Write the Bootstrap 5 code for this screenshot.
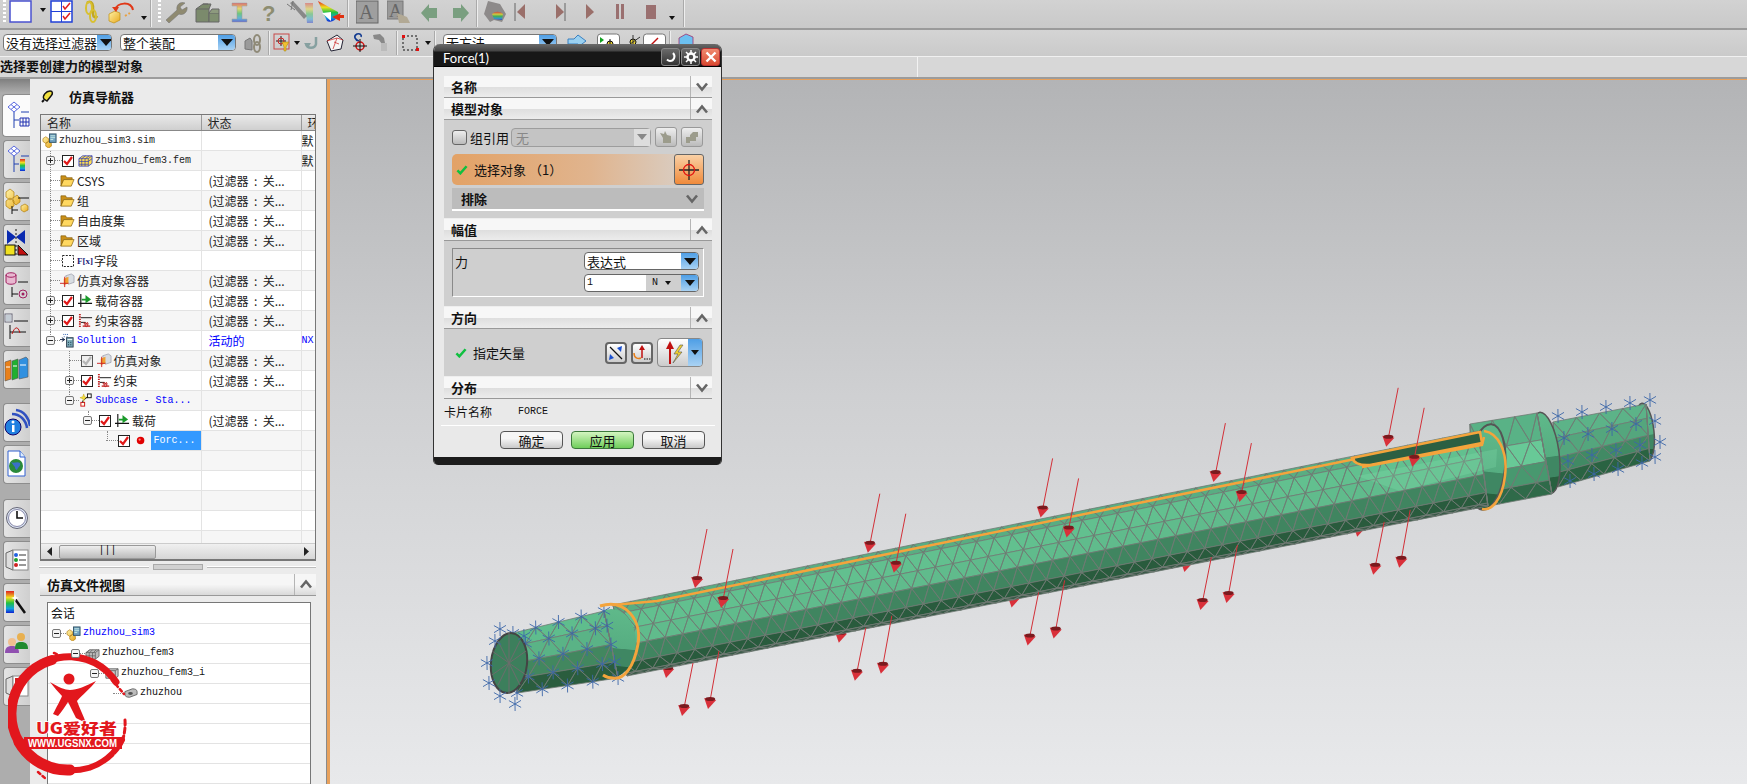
<!DOCTYPE html>
<html lang="zh">
<head>
<meta charset="UTF-8">
<title>Force(1)</title>
<link href="https://cdn.jsdelivr.net/npm/bootstrap@5.3.0/dist/css/bootstrap.min.css" rel="stylesheet">
<style>
    html, body { height: 100%; }
    body { background: #ccc; color: #111; font: 12px/1 "Noto Sans CJK SC", sans-serif; overflow: hidden; }
    .mono { font-family: "Liberation Mono", "Noto Sans CJK SC", monospace; font-size: 10px; }
    .no-shrink { flex: none; }
    svg { display: block; flex: none; }

    /* toolbars */
    .tb-one { height: 30px; background: linear-gradient(#d2d2d2, #c9c9c9); border-bottom: 2px solid #9a9a9a; }
    .tb-two { height: 27px; background: linear-gradient(#d4d4d4, #cacaca); border-bottom: 1px solid #f0f0f0; }
    .tb-sep { width: 1px; height: 24px; background: #eee; border-left: 1px solid #aaa; box-sizing: content-box; margin: 0 3px; }
    .tb-one .tb-sep { height: 27px; }
    .tb-grip { width: 3px; height: 24px; margin: 0 3px; background: repeating-linear-gradient(#fff 0 2px, transparent 2px 4px); }
    .tb-caret { width: 0; height: 0; border: 3.5px solid transparent; border-top: 4px solid #111; border-bottom: 0; }
    .combo { height: 17px; background: #fff; border: 1px solid #777; border-radius: 4px; display: flex; align-items: center; padding-left: 2px; font-size: 13px; overflow: hidden; }
    .combo-text { flex-grow: 1; white-space: nowrap; }
    .combo-btn { width: 17px; align-self: stretch; flex: none; background: linear-gradient(#4f9fe6, #a9d2f3); display: flex; align-items: center; justify-content: center; }
    .combo-btn::after { content: ""; border: 6px solid transparent; border-top: 7px solid #111; border-bottom: 0; }
    .c-a { width: 109px; margin-left: 3px; }
    .c-b { width: 116px; margin-left: 8px; }
    .c-c { width: 114px; margin-left: 4px; }
    .prompt { height: 22px; background: #d7d7d7; border-bottom: 2px solid #9c9c9c; font-weight: 700; font-size: 13px; padding-top: 2px; }
    .prompt-tick { position: absolute; left: 917px; top: 0; bottom: 0; border-left: 1px solid #f2f2f2; }

    /* left side */
    .tab-strip { width: 30px; background: linear-gradient(#7f7f7f 0, #adadad 14px); padding: 15px 0 0 3px; gap: 3px; }
    .side-tab { height: 39px; background: linear-gradient(90deg, #e4e4e4, #cfcfcf); border: 1px solid #8d8d8d; border-right: 0; border-radius: 4px 0 0 4px; display: flex; align-items: center; justify-content: center; }
    .side-tab.on { height: 43px; margin-left: -1px; background: #fbfbfb; }
    .gap-a { margin-top: 11px; }
    .gap-b { margin-top: 12px; }
    .side-panel { width: 296px; background: #ebebeb; }
    .edge-grey { width: 1px; background: #8a8a8a; }
    .edge-orange { width: 3px; background: #e8a15c; }
    .panel-title { height: 35px; padding-left: 11px; font-weight: 700; font-size: 13px; gap: 13px; }
    .nav-box { width: 276px; height: 447px; margin-left: 10px; border: 1px solid #777; background: #fff; border-bottom-width: 2px; }
    .nav-grid { table-layout: fixed; width: 274px; margin: 0; font-size: 12px; }
    .nav-grid > :not(caption) > * > * { padding: 0; height: 20px; border: 0; border-right: 1px solid #e3e3e3; border-bottom: 1px solid #e3e3e3; box-shadow: none; background: transparent; color: #222; white-space: nowrap; overflow: hidden; vertical-align: middle; }
    .nav-grid thead th { height: 16px; background: linear-gradient(#e9e9e9, #cfcfcf); font-weight: 400; padding-left: 6px; border-right: 1px solid #999; border-bottom: 1px solid #888; }
    .nav-grid tr.alt > td { background: #f6f6f6; }
    .nav-grid td.col-state { padding-left: 7px; }
    .nav-grid td.blue { color: #0000ff; }
    .tree-row { height: 19px; display: flex; align-items: center; position: relative; }
    .tree-v { position: absolute; top: 0; bottom: 0; border-left: 1px dotted #888; }
    .tree-v.half { bottom: 50%; }
    .tree-slot { flex: none; height: 19px; display: flex; align-items: center; position: relative; }
    .tree-slot::after { content: ""; flex-grow: 1; border-top: 1px dotted #888; }
    .tree-slot.bare::after { margin-left: 4px; }
    .tree-exp { width: 9px; height: 9px; border: 1px solid #777; border-radius: 2px; background: #f4f4f4; position: relative; flex: none; z-index: 1; }
    .tree-exp::before { content: ""; position: absolute; left: 1px; right: 1px; top: 3px; border-top: 1px solid #222; }
    .tree-exp.plus::after { content: ""; position: absolute; top: 1px; bottom: 1px; left: 3px; border-left: 1px solid #222; }
    .tree-label { margin-left: 2px; white-space: nowrap; }
    .tree-label.sel { background: #3399ff; color: #fff; align-self: stretch; display: flex; align-items: center; padding-left: 3px; flex-grow: 1; margin-right: -1px; }
    .tree-fx { font: 700 9px "Liberation Serif", serif; color: #1c1c78; width: 15px; margin-left: 3px; }
    .h-bar { height: 16px; background: linear-gradient(#f0f0f0, #d6d6d6); border-top: 1px solid #ccc; padding: 0 5px; }
    .h-thumb { width: 97px; height: 14px; margin-left: 5px; background: linear-gradient(#eee, #bbb); border: 1px solid #999; border-radius: 2px; text-align: center; }
    .sash { height: 13px; margin-left: 9px; width: 277px; gap: 4px; }
    .sash i { flex-grow: 1; border-top: 1px solid #fff; border-bottom: 1px solid #bbb; }
    .sash b { width: 50px; height: 6px; background: #d0d0d0; border: 1px solid #aaa; }
    .file-head { width: 276px; height: 22px; margin-left: 10px; background: linear-gradient(#f6f6f6 50%, #d9d9d9); border-bottom: 1px solid #999; font-weight: 700; font-size: 13px; padding-left: 7px; }
    .file-head > span { flex-grow: 1; }
    .chev-cell { width: 22px; align-self: stretch; border-left: 1px solid #b5b5b5; display: flex; align-items: center; justify-content: center; }
    .file-box { width: 264px; margin: 6px 0 0 17px; padding-top: 1px; flex-grow: 1; border: 1px solid #777; border-bottom: 0; background: #fff; }
    .file-line { height: 20px; border-bottom: 1px solid #e3e3e3; padding-left: 3px; }

    /* graphics window */
    .view-3d { background: linear-gradient(#b3b4b6 0, #cfd0d2 45%, #e8e9eb 100%); border-top: 1px solid #e8a15c; min-width: 0; }
    .view-3d svg { width: 100%; height: 100%; }

    /* Force dialog */
    .force-dlg { position: absolute; left: 433px; top: 44px; width: 289px; height: 421px; background: #e9e9e9; border-radius: 7px 7px 5px 5px; overflow: hidden; border-left: 1px solid #333; border-right: 1px solid #333; }
    .dlg-bar { height: 23px; background: linear-gradient(#6a6a6a 0, #444 7px, #171717 8px); border-bottom: 1px solid #000; color: #fff; font: 13px "Lato", "Liberation Sans", sans-serif; padding: 0 1px 0 9px; gap: 1px; }
    .dlg-bar > span { flex-grow: 1; padding-top: 6px; }
    .dlg-btn { width: 19px; height: 18px; border-radius: 3px; background: linear-gradient(#6a6a6a, #333); border: 1px solid #888; display: flex; align-items: center; justify-content: center; }
    .dlg-btn.red { background: linear-gradient(#f08a70, #d94a30); border-color: #b33; }
    .dlg-foot { position: absolute; left: 0; right: 0; bottom: 0; height: 8px; background: #1c1c1c; }
    .dlg-body { padding: 9px 9px 0 10px; }
    .sec-head { height: 22px; background: linear-gradient(#f7f7f7 50%, #dedede 52%, #ececec); border-bottom: 1px solid #999; font-weight: 700; font-size: 13px; padding-left: 7px; }
    .sec-head > span { flex-grow: 1; }
    .sec-body { background: #cfcfcf; border-bottom: 1px solid #eee; }
    .sec-model { height: 99px; padding: 7px 8px 0; }
    .sec-mag { height: 66px; padding: 7px 8px 0; }
    .sec-dir { height: 48px; padding: 0 9px 0 11px; }
    .chk-box { width: 15px; height: 15px; border: 1px solid #666; border-radius: 3px; background: linear-gradient(#eee, #bbb); }
    .ref-label { margin-left: 3px; font-size: 13px; white-space: nowrap; }
    .sel-off { width: 140px; height: 19px; margin-left: 2px; background: #c4c4c4; border: 1px solid #9d9d9d; border-radius: 4px; color: #888; font-size: 13px; padding-left: 4px; }
    .sel-off > span { flex-grow: 1; }
    .sel-off > i { width: 16px; align-self: stretch; background: #ddd; display: flex; align-items: center; justify-content: center; }
    .sel-off > i::after { content: ""; border: 5px solid transparent; border-top: 6px solid #888; border-bottom: 0; }
    .ico-btn { width: 22px; height: 20px; padding: 0; background: linear-gradient(#eee, #bbb); border: 1px solid #999; border-radius: 3px; display: flex; align-items: center; justify-content: center; }
    .ico-btn.dark { border: 2px solid #666; height: 22px; background: linear-gradient(#fff, #ccc); border-radius: 4px; }
    .row-select { height: 31px; margin-top: 7px; padding-left: 4px; border-radius: 5px; background: linear-gradient(90deg, #e3a266, #e0b48e 55%, #d8d3ce); gap: 6px; font-size: 13px; }
    .row-select > span { flex-grow: 1; }
    .aim-btn { width: 30px; height: 31px; border: 1px solid #666; border-radius: 3px; background: linear-gradient(#f9d0a5, #f08a3a); display: flex; align-items: center; justify-content: center; }
    .row-exclude { height: 23px; margin-top: 3px; background: #bcbcbc; border-bottom: 2px solid #fff; font-weight: 700; font-size: 13px; padding: 0 5px 0 9px; }
    .row-exclude > span { flex-grow: 1; }
    .mag-box { height: 49px; border: 1px solid #fff; border-top-color: #8a8a8a; border-left-color: #8a8a8a; padding: 3px 4px 0 2px; font-size: 13px; }
    .mag-label { flex-grow: 1; padding-top: 3px; }
    .mag-inputs { width: 115px; gap: 4px; }
    .input-wrap { height: 18px; font-size: 13px; border-color: #666; }
    .unit-box { width: 35px; align-self: stretch; background: #cfcfcf; display: flex; align-items: center; padding-left: 6px; gap: 7px; }
    .arrow-btn::after { border-width: 5px; border-top-width: 6px; }
    .dir-text { flex-grow: 1; margin-left: 6px; font-size: 13px; }
    .big-split { width: 46px; height: 29px; margin-left: 4px; border: 1px solid #888; border-radius: 4px; background: linear-gradient(#fff, #ccc); overflow: hidden; }
    .split-part { width: 15px; align-self: stretch; margin-left: auto; background: linear-gradient(#4f9fe6, #a9d2f3); display: flex; align-items: center; justify-content: center; }
    .split-part::after { content: ""; border: 4px solid transparent; border-top: 5px solid #111; border-bottom: 0; }
    .card-line { height: 27px; gap: 26px; font-size: 12px; border-bottom: 1px solid #fff; margin: 0 -3px; padding-left: 3px; }
    .dlg-actions { padding: 5px 7px 0 0; gap: 8px; justify-content: flex-end; }
    .dlg-actions .btn { width: 63px; height: 18px; padding: 0; font-size: 13px; line-height: 15px; border: 1px solid #555; border-radius: 4px; color: #111; background: linear-gradient(#f6f6f6 40%, #c9c9c9); }
    .dlg-actions .btn.go { background: linear-gradient(#d3f5c0, #6fce5b); border-color: #3c7a3c; }

    .stamp { position: absolute; left: 8px; top: 650px; }
</style>
</head>
<body class="d-flex flex-column">

<svg width="0" height="0" class="position-absolute">
    <defs>
        <linearGradient id="g-cube" x1="0" y1="0" x2="1" y2="1"><stop offset="0" stop-color="#fff3a8"/><stop offset="1" stop-color="#e8a81e"/></linearGradient>
        <linearGradient id="g-rain" x1="0" y1="0" x2="0" y2="1"><stop offset="0" stop-color="#e02020"/><stop offset=".3" stop-color="#f0e020"/><stop offset=".55" stop-color="#20c040"/><stop offset=".8" stop-color="#10a0e0"/><stop offset="1" stop-color="#1020d0"/></linearGradient>
        <linearGradient id="g-end" x1="0" y1="0" x2="0" y2="1"><stop offset="0" stop-color="#5fb98a"/><stop offset=".55" stop-color="#56ad81"/><stop offset=".56" stop-color="#3f8763"/><stop offset=".8" stop-color="#3f8763"/><stop offset=".81" stop-color="#28603f"/><stop offset="1" stop-color="#28603f"/></linearGradient>
    </defs>
    <symbol id="i-sim" viewBox="0 0 16 16"><path d="M1 6l3-2 3 2v3l-3 2-3-2zM4 11l3-2 3 2v3l-3 2-3-2z" fill="url(#g-cube)" stroke="#b07a10" stroke-width=".7"/><rect x="8" y="1" width="7" height="9" fill="#6fa0c0" stroke="#356"/><path d="M9 3h5M9 5h5M9 7h3" stroke="#dfe" stroke-width=".8"/></symbol>
    <symbol id="i-fem" viewBox="0 0 16 16"><path d="M1 6l4-3h10v8l-4 3H1z" fill="#ffe050" stroke="#2230c0" stroke-width=".8"/><path d="M1 6h10v8M11 6l4-3M4 6v8M7.500 6v8M1 9h10M1 12h10M8 3l-4 3M12 3L8 6M11 9l4-3" stroke="#2230c0" stroke-width=".7" fill="none"/></symbol>
    <symbol id="i-folder" viewBox="0 0 16 16"><path d="M1 3h5l1 2h6v2H4L1 14z" fill="#c98f18" stroke="#805a08" stroke-width=".7"/><path d="M1 14l3-7h11l-3 7z" fill="#ffd860" stroke="#805a08" stroke-width=".7"/></symbol>
    <symbol id="i-simobj" viewBox="0 0 16 16"><path d="M6 3l6-2 3 2v7l-6 2z" fill="#d8dde2" stroke="#889" stroke-width=".6"/><path d="M4 6l5-2v7l-5 2z" fill="#f0a030"/><path d="M5 4v11M0 11h9" stroke="#c22" stroke-width="1"/></symbol>
    <symbol id="i-load" viewBox="0 0 16 16"><path d="M3 1v14M0 11h15" stroke="#111" stroke-width="1.200"/><path d="M4 6h4V2l6 5-6 4V8H4z" fill="#1a9a2a"/></symbol>
    <symbol id="i-cons" viewBox="0 0 16 16"><path d="M2 1v14" stroke="#c02020" stroke-width="2" stroke-dasharray="1.500 1"/><path d="M3 5h12M3 10h5" stroke="#111"/><path d="M6 10l1 2 1-2 1 2 1-2 1 2" fill="none" stroke="#c02020"/><path d="M5 14h8" stroke="#c02020" stroke-width="1.400"/><circle cx="9" cy="13" r="1.500" fill="none" stroke="#c02020"/></symbol>
    <symbol id="i-sol" viewBox="0 0 16 16"><path d="M4 1v1M6 1v1M8 1v1M4 4h1M7 4h1" stroke="#25a" stroke-width="1"/><path d="M0 7h5M2 5l3 2-3 2" stroke="#124" fill="none"/><rect x="7" y="5" width="7" height="10" fill="#79a7b5" stroke="#345"/><path d="M8 7h5" stroke="#fff"/><path d="M8.500 10h1M11 10h1M8.500 12.500h1M11 12.500h1" stroke="#134"/></symbol>
    <symbol id="i-sub" viewBox="0 0 16 16"><path d="M5 1l1 3 3 1-3 1-1 3-1-3-3-1 3-1z" fill="#f4e040" stroke="#c0a010" stroke-width=".5"/><rect x="9" y="1" width="4" height="4" fill="#fff" stroke="#111"/><rect x="2" y="10" width="4" height="4" fill="#ffe" stroke="#d01010"/><path d="M4 8v2M6 7l3-3" stroke="#111"/></symbol>
    <symbol id="i-gmesh" viewBox="0 0 16 16"><path d="M1 7l4-3h10v7l-4 3H1z" fill="#bbb" stroke="#555" stroke-width=".8"/><path d="M1 7h10v7M11 7l4-3M4.500 7v7M8 7v7M1 10.500h10M5 4L2 7M8 4L5 7M12 4L9 7" stroke="#555" stroke-width=".7" fill="none"/></symbol>
    <symbol id="i-gbox" viewBox="0 0 16 16"><path d="M2 5l3-2h10v8l-3 2H2z" fill="#ccc" stroke="#666"/><path d="M2 5h10v8M12 5l3-2" stroke="#666" fill="none"/></symbol>
    <symbol id="i-gdisc" viewBox="0 0 16 16"><path d="M2 6l8-3c3 0 5 1 5 3v3l-8 3c-3 0-5-1-5-3z" fill="#bbb" stroke="#666"/><ellipse cx="8" cy="8" rx="2.500" ry="1.500" fill="#555"/></symbol>
    <symbol id="i-check" viewBox="0 0 12 12"><rect x=".5" y=".5" width="11" height="11" fill="#fff" stroke="#222"/><path d="M2 6l3 3 5-7" fill="none" stroke="#e01818" stroke-width="2.200"/></symbol>
    <symbol id="i-checkg" viewBox="0 0 12 12"><rect x=".5" y=".5" width="11" height="11" fill="#eee" stroke="#555"/><path d="M2 6l3 3 5-7" fill="none" stroke="#b5b5b5" stroke-width="2.200"/></symbol>
    <symbol id="i-dash" viewBox="0 0 12 12"><rect x=".5" y=".5" width="11" height="11" fill="none" stroke="#222" stroke-dasharray="2 1.300"/></symbol>
    <symbol id="i-dot" viewBox="0 0 16 16"><circle cx="7" cy="8" r="4" fill="#e00000"/><circle cx="6" cy="7" r="1.200" fill="#f88"/></symbol>
    <symbol id="c-down" viewBox="0 0 14 10"><path d="M2 1.500l5 6 5-6" fill="none" stroke="#666" stroke-width="2.600"/></symbol>
    <symbol id="c-up" viewBox="0 0 14 10"><path d="M2 8.500l5-6 5 6" fill="none" stroke="#666" stroke-width="2.600"/></symbol>
    <symbol id="t-green" viewBox="0 0 14 12"><path d="M1.500 6.500l3.500 3.500L12.500 1.500" fill="none" stroke="#10c040" stroke-width="3"/></symbol>
</svg>

<!-- toolbar 1 -->
<div class="tb-one d-flex align-items-start">
    <div class="tb-grip"></div>
    <svg width="31" height="26"><rect x="1" y="1" width="21" height="21" fill="#fff" stroke="#4a52d0" stroke-width="1.500"/></svg>
    <div class="tb-caret mt-2 me-1"></div>
    <svg width="32" height="26"><rect x="1" y="1" width="21" height="21" fill="#fff" stroke="#2040d8" stroke-width="1.500"/><path d="M1 11.500h21M11.500 1v21" stroke="#2040d8"/><path d="M13 6l2 3 5-6M13 16l2 3 5-6" fill="none" stroke="#e02020" stroke-width="1.500"/></svg>
    <svg width="26" height="26"><path d="M5 3c3-3 6 0 6 3v8c0 3 3 5 4 2" fill="none" stroke="#c2a820" stroke-width="2.500"/><ellipse cx="7" cy="8" rx="3" ry="6" fill="none" stroke="#d8c030" stroke-width="2"/><ellipse cx="11" cy="16" rx="3" ry="6" fill="none" stroke="#d8c030" stroke-width="2"/></svg>
    <svg width="33" height="26"><path d="M1 14l6-3 5 2v7l-6 3-5-2z" fill="url(#g-cube)" stroke="#c09010" stroke-width=".7"/><path d="M7 10c2-8 16-9 18 0" fill="none" stroke="#e03818" stroke-width="2"/><path d="M4 7l4 5 3-5z" fill="#e03818"/><path d="M17 16l5-3" stroke="#e8a040" stroke-width="2" stroke-dasharray="2 2"/></svg>
    <div class="tb-caret mt-3"></div>
    <div class="tb-sep"></div>
    <div class="tb-grip"></div>
    <svg width="31" height="26"><path d="M2 20l11-10c-1-5 3-9 8-7l-5 4 2 3 5-3c1 5-4 9-8 7L5 23z" fill="#8f8a70" stroke="#777" stroke-width=".6"/></svg>
    <svg width="32" height="26"><path d="M1 9l7-5h8l-2 5v13H1z" fill="#7b8a6c" stroke="#666"/><path d="M14 13h10v9H14zM1 9h13" fill="#7f8f70" stroke="#666"/><path d="M8 4l5 0M14 13l3-4 7 0v4" fill="#8d9a7e" stroke="#666"/></svg>
    <svg width="31" height="26"><path d="M5 3h15v3h-5v13h5v3H5v-3h5V6H5z" fill="url(#g-rain)" opacity=".55" stroke="#777" stroke-width=".5"/></svg>
    <svg width="27" height="26"><text x="4" y="21" font-family="Liberation Sans, sans-serif" font-weight="700" font-size="22" fill="#8d8d70">?</text></svg>
    <svg width="30" height="26"><path d="M5 3l14 16 3-3L8 1z" fill="#888"/><path d="M20 3h8v20h-6z" fill="url(#g-rain)" opacity=".4"/><path d="M2 4l8 6M8 1l-2 9" stroke="#777"/></svg>
    <svg width="29" height="26"><path d="M3 1l20 11c2 6-7 12-11 9z" fill="url(#g-rain)"/><path d="M7 13l9-1 0 9z" fill="#fff"/><path d="M26 13l-9 4 8 4 0-3 4 0 0-3-4 0z" fill="#e03010"/></svg>
    <div class="tb-sep"></div>
    <svg width="31" height="26" class="ms-1"><rect x="0" y="1" width="22" height="22" fill="#9f9f9f" stroke="#666"/><text x="3" y="19" font-family="Liberation Serif, serif" font-size="20" fill="#666">A</text></svg>
    <svg width="34" height="26"><rect x="0" y="1" width="16" height="18" fill="#999" stroke="#777"/><text x="2" y="17" font-family="Liberation Serif, serif" font-size="18" fill="#666">A</text><path d="M10 13l10 4 3 6H12z" fill="#b2a995"/></svg>
    <svg width="32" height="26"><path d="M8 4v4h8v10H8v4L0 13z" fill="#7a9f80"/></svg>
    <svg width="20" height="26"><path d="M8 4v4H0v10h8v4l8-9z" fill="#7a9f80"/></svg>
    <div class="tb-sep"></div>
    <svg width="33" height="26"><path d="M3 14l4-13 12 3 6 10-4 8-8-2-4 2z" fill="#8d8a8a"/><path d="M11 14c3-3 8-3 11 0l-1 6-8-1z" fill="url(#g-rain)" opacity=".7"/></svg>
    <svg width="42" height="26"><path d="M1 3v18" stroke="#666"/><path d="M11 4v15l-8-7z" fill="#9a6f6a"/></svg>
    <svg width="30" height="26"><path d="M0 4v15l8-7z" fill="#9a6f6a"/><path d="M9 3v18" stroke="#666"/></svg>
    <svg width="30" height="26"><path d="M0 4v15l8-7z" fill="#9a6f6a"/></svg>
    <svg width="30" height="26"><rect x="0" y="4" width="3" height="15" fill="#9a7070"/><rect x="5" y="4" width="3" height="15" fill="#9a7070"/></svg>
    <svg width="23" height="26"><rect x="0" y="5" width="10" height="14" fill="#9a7070"/></svg>
    <div class="tb-caret mt-3"></div>
    <div class="tb-sep ms-2"></div>
</div>

<!-- toolbar 2 -->
<div class="tb-two d-flex align-items-center">
    <div class="combo c-a"><span class="combo-text">没有选择过滤器</span><span class="combo-btn"></span></div>
    <div class="combo c-b"><span class="combo-text">整个装配</span><span class="combo-btn"></span></div>
    <svg width="24" height="22" class="ms-2"><path d="M1 9l5-3 2 3v9l-7-1z" fill="#9a9a9a" stroke="#777"/><ellipse cx="13" cy="8" rx="3" ry="5" fill="none" stroke="#8f8a78" stroke-width="2"/><ellipse cx="13" cy="15" rx="3" ry="5" fill="none" stroke="#8f8a78" stroke-width="2"/></svg>
    <div class="tb-sep ms-0"></div>
    <svg width="17" height="20"><rect x="1" y="1" width="15" height="15" fill="none" stroke="#c84848"/><path d="M8 3v10M3 8h10" stroke="#222"/><circle cx="8" cy="8" r="3" fill="none" stroke="#d02020"/><path d="M9 9h7l-3 5v4h-2v-4z" fill="#f0c030" stroke="#a08010" stroke-width=".5"/></svg>
    <div class="tb-caret mx-1"></div>
    <svg width="22" height="20"><path d="M2 11c1 5 9 5 10 0V4" fill="none" stroke="#86a0a0" stroke-width="2.500"/><path d="M0 10h7l-3 5z" fill="#86a0a0"/></svg>
    <svg width="26" height="20"><path d="M1 8l10-6 6 5-2 9-10 2z" fill="#f5f5f5" stroke="#223" stroke-width="1"/><path d="M1 8l10-3 6 2M11 5l-4 11M8 9l5 2" fill="none" stroke="#c33" stroke-width=".8"/></svg>
    <svg width="20" height="22"><path d="M7 9C3 8 1 4 5 2c3-1 5 1 4 3" fill="none" stroke="#123a90" stroke-width="1.600"/><circle cx="8" cy="14" r="4" fill="none" stroke="#d01010" stroke-width="1.500"/><path d="M8 7v13M1 14h14" stroke="#111"/></svg>
    <svg width="24" height="22"><path d="M1 3l7-1 4 4 1 5-3 1-3-4-5-1z" fill="#888"/><rect x="9" y="11" width="6" height="8" fill="#bbb"/></svg>
    <div class="tb-sep ms-0"></div>
    <svg width="24" height="20"><rect x="2" y="3" width="14" height="14" fill="none" stroke="#111" stroke-dasharray="2 2"/><rect x="1" y="2" width="3" height="3" fill="#e01010"/><rect x="15" y="15" width="3" height="3" fill="#e01010"/></svg>
    <div class="tb-caret"></div>
    <div class="tb-sep"></div>
    <div class="combo c-c"><span class="combo-text">无方法</span><span class="combo-btn"></span></div>
    <svg width="32" height="22" class="ms-2"><path d="M3 7h6l4-4 8 6-8 6v-3H3z" fill="#9ad0f0" stroke="#3a80c0"/></svg>
    <svg width="26" height="22"><rect x=".5" y="2" width="22" height="19" rx="3" fill="#fff" stroke="#777"/><path d="M3 5l4 3-4 3z" fill="#10a020"/><circle cx="13" cy="12" r="3" fill="#e8d030" stroke="#111"/><path d="M13 7v10M8 16l10 0" stroke="#111"/></svg>
    <svg width="20" height="22"><circle cx="10" cy="10" r="3" fill="#e8d030" stroke="#111"/><path d="M10 3v14M3 15l14-10" stroke="#333"/></svg>
    <svg width="26" height="22"><rect x=".5" y="2" width="22" height="19" rx="3" fill="#fff" stroke="#777"/><path d="M7 14l8-8" stroke="#c01010" stroke-width="1.500"/></svg>
    <div class="tb-sep ms-0"></div>
    <svg width="18" height="22" class="ms-1"><path d="M1 6l7-4 7 3v10l-7 4-7-3z" fill="#6cc0f0" stroke="#a03070" stroke-width=".8"/></svg>
</div>

<!-- prompt line -->
<div class="prompt position-relative">选择要创建力的模型对象<span class="prompt-tick"></span></div>

<div class="flex-grow-1 d-flex overflow-hidden">
    <!-- resource bar -->
    <div class="tab-strip d-flex flex-column no-shrink">
        <div class="side-tab on"><svg width="26" height="30"><path d="M4 7l6-5 6 5-6 5z" fill="#fff" stroke="#5a6ae0"/><path d="M7 4.500l6 5M13 4.500l-6 5" stroke="#5a6ae0"/><path d="M10 12v16M10 20h5M17 12h8" stroke="#2040b0"/><path d="M16 18h9v8h-9zM19 18v8M22 18v8M16 22h9" fill="none" stroke="#2030b0"/></svg></div>
        <div class="side-tab"><svg width="26" height="30"><path d="M4 7l6-5 6 5-6 5z" fill="#fff" stroke="#5a6ae0"/><path d="M7 4.500l6 5M13 4.500l-6 5" stroke="#5a6ae0"/><path d="M10 12v16M10 20h5M17 12h8" stroke="#2040b0"/><rect x="16" y="15" width="5" height="12" fill="url(#g-rain)"/></svg></div>
        <div class="side-tab"><svg width="26" height="30"><path d="M2 6l4-3 4 3v5l-4 3-4-3zM2 15l4-3 4 3v5l-4 3-4-3zM9 12l4-3 3 3v4l-4 3-3-3z" fill="url(#g-cube)" stroke="#b08010" stroke-width=".7"/><path d="M14 12h11M8 24h6M8 20v8" stroke="#111"/><path d="M17 20l4-2 3 2v4l-4 2-3-2z" fill="url(#g-cube)" stroke="#b08010" stroke-width=".7"/></svg></div>
        <div class="side-tab"><svg width="26" height="30"><path d="M3 2l9 7 9-7v14l-9-7-9 7z" fill="#0a2ab0"/><path d="M12 1v28" stroke="#111" stroke-dasharray="2 2"/><rect x="1" y="17" width="10" height="10" fill="#f0e020" stroke="#111"/><path d="M14 17l10 10H14z" fill="#c01010" stroke="#111"/></svg></div>
        <div class="side-tab"><svg width="26" height="30"><path d="M2 5c0-3 10-3 10 0v7c0 3-10 3-10 0z" fill="#e8b8d0" stroke="#a02060"/><path d="M2 5c0 3 10 3 10 0" fill="none" stroke="#a02060"/><path d="M14 12h10M8 17v10M8 24h6" stroke="#111"/><circle cx="19" cy="24" r="4" fill="none" stroke="#a02060"/><circle cx="19" cy="24" r="1.500" fill="#a02060"/></svg></div>
        <div class="side-tab"><svg width="26" height="30"><rect x="1" y="2" width="7" height="8" fill="#fff" stroke="#667"/><path d="M2 4h5M2 6h5M2 8h5" stroke="#89a"/><path d="M10 9h14M6 13v14M6 20h16" stroke="#111"/><path d="M8 22c3-8 6-8 8-1" fill="none" stroke="#c01010"/></svg></div>
        <div class="side-tab"><svg width="26" height="28"><path d="M1 7l6-2v19l-6 2z" fill="#e8801a" stroke="#555" stroke-width=".6"/><path d="M8 6l6-2v19l-6 2z" fill="#20b030" stroke="#555" stroke-width=".6"/><path d="M15 5l7-3 2 2v18l-9 2z" fill="#3090e0" stroke="#555" stroke-width=".6"/><path d="M2 12h4M9 11h4M16 10h6" stroke="#fff"/></svg></div>
        <div class="side-tab gap-a"><svg width="26" height="30"><circle cx="9" cy="20" r="8" fill="#2080e0" stroke="#106"/><rect x="8" y="18" width="2.500" height="7" fill="#fff"/><circle cx="9" cy="15" r="1.500" fill="#fff"/><path d="M8 7c8 0 14 6 15 14M12 3c8 1 13 8 14 16" fill="none" stroke="#3050c0" stroke-width="2.500"/></svg></div>
        <div class="side-tab"><svg width="22" height="28"><path d="M2 1h12l5 6v19H2z" fill="#fff" stroke="#3060d0"/><path d="M14 1v6h5" fill="#def" stroke="#3060d0"/><circle cx="10" cy="16" r="7" fill="#2a8a3a"/><path d="M5 12c3 2 6-1 9 1 1 3-2 4-3 7-3-1-1-3-3-4z" fill="#3a70c8"/></svg></div>
        <div class="side-tab gap-b"><svg width="24" height="24"><circle cx="12" cy="12" r="10.500" fill="#dde6f4" stroke="#667"/><circle cx="12" cy="12" r="8.500" fill="#fff" stroke="#88a"/><path d="M12 5v7h6" fill="none" stroke="#111" stroke-width="1.600"/></svg></div>
        <div class="side-tab"><svg width="24" height="24"><path d="M1 5l7-3v20l-7-3z" fill="#ddd" stroke="#666"/><rect x="8" y="2" width="15" height="20" fill="#fff" stroke="#888"/><circle cx="11" cy="7" r="2" fill="#2060e0"/><circle cx="11" cy="12" r="2" fill="#20a030"/><circle cx="11" cy="17" r="2" fill="#d02020"/><path d="M14 7h7M14 12h7M14 17h7" stroke="#333"/></svg></div>
        <div class="side-tab"><svg width="24" height="28"><rect x="1" y="3" width="8" height="22" fill="url(#g-rain)"/><path d="M10 11l10 14" stroke="#111" stroke-width="2.500"/><path d="M9 9l1-3 1 3 3 1-3 1-1 3-1-3-3-1z" fill="#fff"/></svg></div>
        <div class="side-tab"><svg width="26" height="26"><circle cx="8" cy="11" r="4" fill="#f0c090"/><path d="M1 22c0-6 3-7 7-7s7 1 7 7z" fill="#9050b0"/><circle cx="17" cy="6" r="4" fill="#e8b050"/><path d="M11 18c0-6 2-7 6-7s7 1 7 7z" fill="#208a30"/></svg></div>
        <div class="side-tab"><svg width="24" height="24"><path d="M1 5l7-3v20l-7-3z" fill="#ddd" stroke="#666"/><rect x="8" y="2" width="15" height="20" fill="#fff" stroke="#888"/><rect x="10" y="4" width="6" height="7" fill="#c22"/></svg></div>
    </div>

    <!-- navigator panel -->
    <div class="side-panel d-flex flex-column no-shrink">
        <div class="panel-title d-flex align-items-center">
            <svg width="15" height="15"><path d="M3 10c-2-3 2-8 6-8 3 0 3 3 1 5l-4 5z" fill="#f0e040" stroke="#111" stroke-width="1.500"/><path d="M3 11l-2 2" stroke="#111" stroke-width="2"/></svg>
            <span>仿真导航器</span>
        </div>
        <div class="nav-box d-flex flex-column">
            <div class="flex-grow-1 overflow-hidden">
                <table class="table nav-grid">
                    <colgroup><col width="160"><col width="100"><col width="14"></colgroup>
                    <thead><tr><th>名称</th><th>状态</th><th>环</th></tr></thead>
                    <tbody id="navRows"></tbody>
                </table>
            </div>
            <div class="h-bar d-flex align-items-center">
                <svg width="8" height="9"><path d="M6 0v9L1 4.500z" fill="#222"/></svg>
                <div class="h-thumb mono">|||</div>
                <svg width="8" height="9" class="ms-auto"><path d="M2 0v9l5-4.500z" fill="#222"/></svg>
            </div>
        </div>
        <div class="sash d-flex align-items-center"><i></i><b></b><i></i></div>
        <div class="file-head d-flex align-items-center"><span>仿真文件视图</span><div class="chev-cell"><svg width="14" height="10"><use href="#c-up"/></svg></div></div>
        <div class="file-box" id="fileRows"></div>
    </div>
    <div class="edge-grey"></div>
    <div class="edge-orange"></div>

    <!-- graphics window -->
    <div class="view-3d flex-grow-1">
        <svg id="model" viewBox="330 79 1417 705" preserveAspectRatio="xMinYMin slice"></svg>
    </div>
</div>

<!-- Force dialog -->
<div class="force-dlg">
    <div class="dlg-bar d-flex align-items-start">
        <span>Force(1)</span>
        <div class="dlg-btn mt-1"><svg width="12" height="12"><path d="M8 2c3 3 1 8-3 8-1 0-2-.5-3-1.500" fill="none" stroke="#fff" stroke-width="2"/></svg></div>
        <div class="dlg-btn mt-1"><svg width="14" height="14"><circle cx="7" cy="7" r="3.500" fill="none" stroke="#fff" stroke-width="2.500"/><path d="M7 0v3M7 11v3M0 7h3M11 7h3M2 2l2 2M10 10l2 2M12 2l-2 2M2 12l2-2" stroke="#fff" stroke-width="1.500"/></svg></div>
        <div class="dlg-btn red mt-1"><svg width="12" height="12"><path d="M1.500 1.500l9 9M10.500 1.500l-9 9" stroke="#fff" stroke-width="2.400"/></svg></div>
    </div>
    <div class="dlg-body">
        <div class="sec-head d-flex align-items-center"><span>名称</span><div class="chev-cell"><svg width="14" height="10"><use href="#c-down"/></svg></div></div>
        <div class="sec-head d-flex align-items-center mt-0"><span>模型对象</span><div class="chev-cell"><svg width="14" height="10"><use href="#c-up"/></svg></div></div>
        <div class="sec-body sec-model">
            <div class="d-flex align-items-center">
                <div class="chk-box no-shrink"></div><span class="ref-label">组引用</span>
                <div class="sel-off d-flex align-items-center"><span>无</span><i></i></div>
                <button type="button" class="btn ico-btn ms-1"><svg width="16" height="16"><path d="M2 4l4 1 1-3 2 4 4 1v7H5V9z" fill="#9c9c8c"/></svg></button>
                <button type="button" class="btn ico-btn ms-1"><svg width="16" height="16"><path d="M2 8h4V6l3-3h5v5h-2v4H6v2H2z" fill="#9c9c8c"/></svg></button>
            </div>
            <div class="row-select d-flex align-items-center">
                <svg width="12" height="10"><use href="#t-green"/></svg>
                <span>选择对象 （1）</span>
                <div class="aim-btn"><svg width="24" height="24"><path d="M12 2v20M2 12h20" stroke="#222" stroke-width="1.300"/><circle cx="12" cy="12" r="5.500" fill="none" stroke="#e01010" stroke-width="1.300"/></svg></div>
            </div>
            <div class="row-exclude d-flex align-items-center"><span>排除</span><svg width="14" height="10"><use href="#c-down"/></svg></div>
        </div>
        <div class="sec-head d-flex align-items-center"><span>幅值</span><div class="chev-cell"><svg width="14" height="10"><use href="#c-up"/></svg></div></div>
        <div class="sec-body sec-mag">
            <div class="mag-box d-flex">
                <span class="mag-label">力</span>
                <div class="mag-inputs d-flex flex-column">
                    <div class="combo input-wrap"><span class="combo-text">表达式</span><span class="combo-btn"></span></div>
                    <div class="combo input-wrap"><span class="combo-text mono">1</span><span class="unit-box mono">N<span class="tb-caret"></span></span><span class="combo-btn arrow-btn"></span></div>
                </div>
            </div>
        </div>
        <div class="sec-head d-flex align-items-center"><span>方向</span><div class="chev-cell"><svg width="14" height="10"><use href="#c-up"/></svg></div></div>
        <div class="sec-body sec-dir d-flex align-items-center">
            <svg width="12" height="10"><use href="#t-green"/></svg>
            <span class="dir-text">指定矢量</span>
            <button type="button" class="btn ico-btn dark"><svg width="16" height="16"><path d="M2 2l12 12" stroke="#111" stroke-width="1.200"/><path d="M14 1l-1 6-4-4zM1 15l1-6 4 4z" fill="#1a50d0"/></svg></button>
            <button type="button" class="btn ico-btn dark ms-1"><svg width="18" height="18"><path d="M9 14V4" stroke="#c01010" stroke-width="1.500"/><path d="M9 1l3 5H6z" fill="#c01010"/><path d="M1 9c0 6 5 6 7 5" fill="none" stroke="#e8801a" stroke-width="1.500"/><path d="M11 15h1.500M13.500 15H15M16 15h1.500" stroke="#111"/></svg></button>
            <div class="big-split d-flex align-items-center">
                <svg width="30" height="27"><path d="M12 25V9" stroke="#c01010" stroke-width="2"/><path d="M12 2l4 8H8z" fill="#c01010"/><path d="M22 6l-6 9h4l-5 9 9-11h-4l5-7z" fill="#f0d030" stroke="#555" stroke-width=".6"/></svg>
                <div class="split-part"></div>
            </div>
        </div>
        <div class="sec-head d-flex align-items-center"><span>分布</span><div class="chev-cell"><svg width="14" height="10"><use href="#c-down"/></svg></div></div>
        <div class="card-line d-flex align-items-center"><span>卡片名称</span><span class="mono">FORCE</span></div>
        <div class="dlg-actions d-flex">
            <button type="button" class="btn">确定</button>
            <button type="button" class="btn go">应用</button>
            <button type="button" class="btn">取消</button>
        </div>
    </div>
    <div class="dlg-foot"></div>
</div>

<!-- watermark -->
<svg class="stamp" width="125" height="132" viewBox="0 0 125 132">
    <g fill="none" stroke="#e2171d" stroke-linecap="round">
        <path d="M11 92A56 56 0 0 1 44 10" stroke-width="10" stroke-dasharray="60 1 30 2"/>
        <path d="M40 11A56 56 0 0 1 108 32" stroke-width="7" stroke-dasharray="24 2 12 2 30 3"/>
        <path d="M11 92A56 56 0 0 0 62 120" stroke-width="11"/>
        <path d="M58 120A56 56 0 0 0 114 90" stroke-width="6" stroke-dasharray="22 2 26 3 8 2"/>
        <path d="M117 70A56 56 0 0 1 114 92" stroke-width="3" stroke-dasharray="5 3"/>
        <path d="M104 30l12 14M16 32l-9 8M46 3l7 3M2 70l3 8M30 122l8 7" stroke-width="2.500" stroke-dasharray="3 3"/>
    </g>
    <circle cx="61" cy="29" r="5.500" fill="#e2171d"/>
    <path d="M42 32c8 5 15 8 20 8 7 0 16-4 26-9-6 8-14 14-19 20 3 8 6 14 9 22l-10-5c-3-6-6-12-8-16-3 5-6 9-10 14l-5-2c4-8 7-13 9-18-4-4-8-9-12-14z" fill="#e2171d"/>
    <rect x="16" y="87" width="98" height="12" fill="#e2171d"/>
    <text x="28" y="84" textLength="81" lengthAdjust="spacingAndGlyphs" font-family="Noto Sans CJK SC, sans-serif" font-weight="900" font-size="15" fill="#e2171d" stroke="#fff" stroke-width="1.500" paint-order="stroke">UG爱好者</text>
    <text x="20" y="97" textLength="89" lengthAdjust="spacingAndGlyphs" font-family="Liberation Sans, sans-serif" font-weight="700" font-size="10.500" fill="#fff">WWW.UGSNX.COM</text>
</svg>

<script>
    // 仿真导航器 rows: base x, expander, check, icon, label
    const F = "(过滤器 : 关...";
    const rows = [
        { x: 42, raw: true, icon: "i-sim", label: "zhuzhou_sim3.sim", mono: 1, s: "", e: "默" },
        { b: 46, exp: "plus", chk: "i-check", icon: "i-fem", label: "zhuzhou_fem3.fem", mono: 1, s: "", e: "默", v: [50] },
        { b: 46, icon: "i-folder", label: "CSYS", s: F, v: [50] },
        { b: 46, icon: "i-folder", label: "组", s: F, v: [50] },
        { b: 46, icon: "i-folder", label: "自由度集", s: F, v: [50] },
        { b: 46, icon: "i-folder", label: "区域", s: F, v: [50] },
        { b: 46, chk: "i-dash", fx: 1, label: "字段", s: "", v: [50] },
        { b: 46, icon: "i-simobj", label: "仿真对象容器", s: F, v: [50] },
        { b: 46, exp: "plus", chk: "i-check", icon: "i-load", label: "载荷容器", s: F, v: [50] },
        { b: 46, exp: "plus", chk: "i-check", icon: "i-cons", label: "约束容器", s: F, v: [50] },
        { b: 46, exp: "minus", icon: "i-sol", label: "Solution 1", mono: 1, blue: 1, s: "活动的", e: "NX", h: [50] },
        { b: 64.5, chk: "i-checkg", icon: "i-simobj", label: "仿真对象", s: F, v: [69] },
        { b: 64.5, exp: "plus", chk: "i-check", icon: "i-cons", label: "约束", s: F, v: [69] },
        { b: 64.5, exp: "minus", icon: "i-sub", label: "Subcase - Sta...", mono: 1, blue: 1, s: "", h: [69] },
        { b: 83, exp: "minus", chk: "i-check", icon: "i-load", label: "载荷", s: F, h: [88] },
        { b: 101.5, chk: "i-check", icon: "i-dot", label: "Forc...", mono: 1, sel: 1, s: "", h: [107] }
    ];

    function treeHtml(r, origin) {
        let html = "";
        (r.v || []).forEach(x => { html += `<span class="tree-v" style="left:${x - origin}px"></span>`; });
        (r.h || []).forEach(x => { html += `<span class="tree-v half" style="left:${x - origin}px"></span>`; });
        const start = (r.raw ? r.x : r.b) - origin;
        html += `<span class="no-shrink" style="width:${start}px"></span>`;
        if (!r.raw) {
            const slot = r.chk ? 16 : 14;
            html += `<span class="tree-slot ${r.exp ? "" : "bare"}" style="width:${slot}px">` + (r.exp ? `<span class="tree-exp ${r.exp}"></span>` : "") + `</span>`;
        }
        if (r.chk) html += `<svg width="12" height="12"><use href="#${r.chk}"/></svg>`;
        if (r.fx) html += `<span class="tree-fx">F[x]</span>`;
        if (r.icon) html += `<svg width="15" height="15" class="${r.chk ? "ms-1" : ""}"><use href="#${r.icon}"/></svg>`;
        const cls = "tree-label" + (r.mono ? " mono" : "") + (r.sel ? " sel" : "");
        const color = r.blue ? ' style="color:#0000ff"' : "";
        html += `<span class="${cls}"${color}>${r.label}</span>`;
        return `<div class="tree-row">${html}</div>`;
    }

    const navRows = document.getElementById("navRows");
    let navHtml = "";
    rows.forEach((r, i) => {
        const st = r.blue && r.s ? "col-state blue" : "col-state";
        const env = r.e === "NX" ? "blue mono" : "";
        navHtml += `<tr class="${i % 2 ? "alt" : ""}"><td>${treeHtml(r, 41)}</td><td class="${st}">${r.s.replace(" : ", "  :  ").replace(/ /g, "&nbsp;")}</td><td class="${env}">${r.e || ""}</td></tr>`;
    });
    for (let i = 0; i < 5; i++) navHtml += `<tr class="${i % 2 ? "" : "alt"}"><td></td><td></td><td></td></tr>`;
    navRows.innerHTML = navHtml;

    // 仿真文件视图
    const files = [
        { text: "会话" },
        { b: 52, exp: "minus", icon: "i-sim", label: "zhuzhou_sim3", mono: 1, blue: 1 },
        { b: 71, exp: "minus", icon: "i-gmesh", label: "zhuzhou_fem3", mono: 1 },
        { b: 90, exp: "minus", icon: "i-gbox", label: "zhuzhou_fem3_i", mono: 1 },
        { b: 109, icon: "i-gdisc", label: "zhuzhou", mono: 1 },
        {}, {}, {}, {}
    ];
    document.getElementById("fileRows").innerHTML = files.map(r => {
        if (r.text) return `<div class="file-line d-flex align-items-center">${r.text}</div>`;
        if (!r.label) return `<div class="file-line"></div>`;
        return `<div class="file-line">${treeHtml(r, 51)}</div>`;
    }).join("");

    // 网格模型
    const lerp = (a, b, t) => [a[0] + (b[0] - a[0]) * t, a[1] + (b[1] - a[1]) * t];
    const pt = p => p[0].toFixed(1) + " " + p[1].toFixed(1);
    let out = "";

    function mesh(P0, P1, Q0, Q1, cols, fr, fills, nodes) {
        const node = (i, j) => {
            const t = Math.min(1, Math.max(0, (i + (j % 2) * 0.5) / cols));
            return lerp(lerp(P0, P1, t), lerp(Q0, Q1, t), fr[j]);
        };
        for (let j = 0; j < fr.length - 1; j++) {
            let d = "";
            for (let i = -1; i <= cols; i++) {
                const a = node(i, j), b = node(i + 1, j), c = node(i, j + 1), e = node(i + 1, j + 1);
                if (j % 2 === 0) d += `M${pt(a)}L${pt(b)}L${pt(c)}ZM${pt(c)}L${pt(e)}L${pt(b)}Z`;
                else d += `M${pt(a)}L${pt(b)}L${pt(e)}ZM${pt(c)}L${pt(e)}L${pt(a)}Z`;
            }
            out += `<path d="${d}" fill="${fills[j]}" stroke="#707a74" stroke-width=".8"/>`;
        }
        if (nodes) {
            for (let j = 0; j < fr.length; j++) for (let i = 0; i <= cols; i++) star(node(i, j));
        }
    }

    function star(p) {
        let d = "";
        for (let k = 0; k < 3; k++) {
            const a = 0.5 + k * 1.05, dx = Math.cos(a) * 7, dy = Math.sin(a) * 7;
            d += `M${(p[0] - dx).toFixed(1)} ${(p[1] - dy).toFixed(1)}L${(p[0] + dx).toFixed(1)} ${(p[1] + dy).toFixed(1)}`;
        }
        out += `<path d="${d}" stroke="#3c66a8" stroke-width=".9" fill="none"/>`;
    }

    function cone(tx, ty) {
        const bx = tx + 2.2, by = ty - 10;
        out += `<path d="M${bx - 6} ${by - 1}L${bx + 6} ${by + 1}L${tx} ${ty}Z" fill="#d9303a"/><ellipse cx="${bx}" cy="${by}" rx="5" ry="2" fill="#7a1a1e"/>`;
    }
    function arrow(x0, y0, tx, ty) {
        out += `<path d="M${x0} ${y0}L${tx + 2} ${ty - 8}" stroke="#d23038" stroke-width="1"/>`;
        cone(tx, ty);
    }

    // 被遮住的箭头
    for (let g = 0; g < 5; g++) cone(666 + g * 172.8, 677 - g * 35.3);

    const mainFr = [0, 0.13, 0.36, 0.58, 0.82, 0.96, 1];
    const mainFill = ["#59ad82", "#62c08f", "#60bb8c", "#408560", "#295b3d", "#3a5a48"];

    // 右端小轴
    out += `<ellipse cx="1645" cy="431" rx="9" ry="29" fill="url(#g-end)" stroke="#555" stroke-width="1.500" transform="rotate(-6 1645 431)"/>`;
    mesh([1553, 421], [1646, 403], [1558, 486], [1650, 460], 4, [0, .25, .55, .78, 1], ["#5cb388", "#54a67d", "#418a64", "#2a6342"]);
    // 轴肩
    out += `<ellipse cx="1545" cy="452" rx="14" ry="41" fill="url(#g-end)" stroke="#555" stroke-width="1.500" transform="rotate(-8 1545 452)"/>`;
    mesh([1470, 423], [1537, 412], [1473, 508], [1552, 493], 3, [0, .33, .6, .83, 1], ["#59b286", "#68c997", "#48986f", "#2f6a49"]);
    // 右端约束
    [[1558, 415], [1582, 411], [1606, 406], [1630, 402], [1650, 399], [1564, 437], [1588, 433], [1612, 428], [1636, 423], [1655, 420], [1568, 460], [1592, 454], [1616, 449], [1640, 444], [1660, 441], [1570, 480], [1594, 473], [1618, 468], [1642, 462], [1655, 456]].forEach(star);
    out += `<ellipse cx="1487" cy="466" rx="18" ry="43" fill="url(#g-end)" stroke="#555" stroke-width="2" transform="rotate(6 1487 466)"/>`;
    // 主轴
    mesh([613, 604], [1478, 430], [627, 675], [1488, 505], 49, mainFr, mainFill);
    out += `<path d="M1357 475L1497 448L1496 466L1400 490Z" fill="#8fe8b8" opacity=".22"/>`;
    // 键槽
    out += `<path d="M1352 457L1480 431L1482 442L1370 464Q1355 465 1352 457Z" fill="#2c5f42" stroke="#f4a43c" stroke-width="2.500"/>`;
    // 橙色边线
    out += `<path d="M613 604L657 600L1355 458M1362 466L1482 444L1484 436" fill="none" stroke="#f4a43c" stroke-width="2.500"/>`;
    out += `<path d="M1484 430c14 2 24 20 21 45s-14 35-23 33" fill="none" stroke="#f4a43c" stroke-width="2.500"/>`;
    // 左端小轴
    out += `<ellipse cx="610" cy="643" rx="26" ry="35" fill="url(#g-end)" transform="rotate(5 610 643)"/>`;
    mesh([513, 632], [604, 610], [517, 692], [618, 677], 4, [0, .22, .5, .76, 1], ["#5fbd8d", "#5ab386", "#42875f", "#2a5d3e"], true);
    out += `<path d="M600 605c26-8 42 15 38 38s-14 36-25 34c-4 0-7-1-10-3" fill="none" stroke="#f4a43c" stroke-width="3"/>`;
    // 端面
    out += `<ellipse cx="509" cy="662" rx="18" ry="30" fill="#3c7f5c" stroke="#444" stroke-width="2" transform="rotate(6 509 662)"/>`;
    out += `<path d="M509 632L509 692M492 650L526 674M492 674L526 650M498 640L520 684M520 640L498 684" stroke="#6c6c6c" fill="none"/>`;
    [[495, 640], [487, 662], [489, 682], [500, 695], [515, 703], [524, 635], [500, 628]].forEach(star);

    // 力箭头
    for (let g = 0; g < 5; g++) {
        const dx = g * 172.8, dy = -g * 35.3;
        arrow(707 + dx, 528 + dy, 695 + dx, 587 + dy);
        arrow(733 + dx, 548 + dy, 721 + dx, 607 + dy);
        arrow(693 + dx, 662 + dy, 682 + dx, 715 + dy);
        arrow(719 + dx, 650 + dy, 708 + dx, 708 + dy);
    }
    document.getElementById("model").innerHTML = out;
</script>
<script src="https://cdn.jsdelivr.net/npm/bootstrap@5.3.0/dist/js/bootstrap.bundle.min.js"></script>
</body>
</html>
